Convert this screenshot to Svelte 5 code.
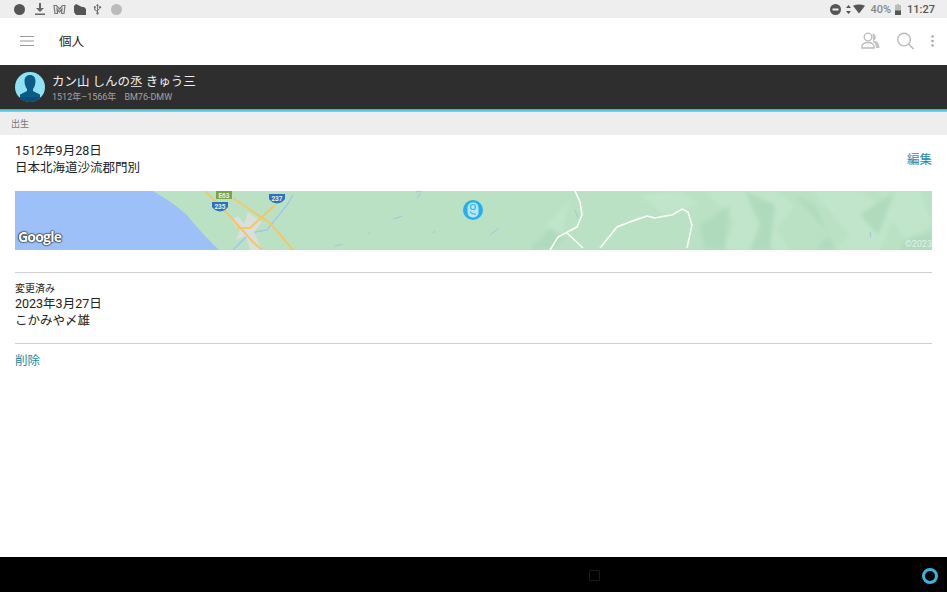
<script>
  const lightHills = [
    "M705 191L735 222L722 250L760 250L795 205L775 191Z",
    "M812 191L850 235L835 250L880 250L895 215L860 191Z",
    "M880 191L920 191L932 225L905 240L890 215Z",
    "M640 195L680 191L700 205L665 215Z",
    "M545 225L570 200L560 240Z",
    "M765 215L790 250H745Z"
  ];
  const darkHills = [
    "M745 191L760 225L750 250L770 250L775 205Z",
    "M795 195L830 235L815 250L835 250L815 205Z",
    "M860 215L895 191L878 235Z",
    "M528 250L550 228L565 238L550 250Z",
    "M700 225L730 205L725 250L705 250Z",
    "M905 240L932 232V250H900Z"
  ];
</script>

<div class="screen">
  <header class="status">
    <div class="status-left">
      <span class="dot dark"></span>
      <svg width="10" height="12" viewBox="0 0 10 12"><path d="M4 0h2v5h3L5 9 1 5h3zM0 10.500h10V12H0z" fill="#666"/></svg>
      <svg width="13" height="11" viewBox="0 0 13 11"><path d="M1 1.500h2.500L6.500 5l3-3.500H12l-1 8H8.500L9 5 6.500 8 4 5l.5 4.500H2z" fill="none" stroke="#777" stroke-width="1.200"/></svg>
      <svg width="12" height="11" viewBox="0 0 12 11"><path d="M0 2l2-2 2 1 2 1 2 1h2l2 2v6H2L0 8z" fill="#555"/></svg>
      <svg class="usb" width="9" height="13" viewBox="0 0 10 13"><path d="M5 0l1.500 2.500h-1v7a1.300 1.300 0 1 1-1 0v-7h-1zM1 3h2v2h-.5v1.500l2 1.500v1l-3-2V5H1zM8 3a1 1 0 1 1-.5 1.800V6l-2 1.500v-1l1.500-1v-.7A1 1 0 0 1 8 3z" fill="#666"/></svg>
      <span class="dot light"></span>
    </div>
    <div class="status-right">
      <svg width="11" height="11" viewBox="0 0 11 11"><circle cx="5.500" cy="5.500" r="5.500" fill="#555"/><rect x="2.500" y="4.500" width="6" height="2" fill="#eee"/></svg>
      <svg class="arrows" width="5" height="9" viewBox="0 0 5 9"><path d="M2.500 0L5 3H0zM2.500 9L0 6h5z" fill="#555"/></svg>
      <svg class="wifi" width="12" height="10" viewBox="0 0 13 10"><path d="M0 1.500Q6.500-1.500 13 1.500L6.500 10z" fill="#555"/></svg>
      <span class="pct">40%</span>
      <svg class="batt" width="6" height="11" viewBox="0 0 6 11"><path d="M2 0h2v1h2v10H0V1h2z" fill="#bbb"/><path d="M0 6.500h6V11H0z" fill="#555"/></svg>
      <span class="clock">11:27</span>
    </div>
  </header>

  <nav class="toolbar">
    <div class="toolbar-left">
      <svg width="14" height="10" viewBox="0 0 14 10"><path d="M0 .5h14M0 5h14M0 9.500h14" stroke="#999" stroke-width="1"/></svg>
      <span class="title">個人</span>
    </div>
    <div class="toolbar-right">
      <svg width="19" height="17" viewBox="0 0 19 17"><circle cx="7" cy="5" r="3.800" fill="none" stroke="#bbb" stroke-width="1.300"/><path d="M.7 16c0-4 2.500-5.500 6.300-5.500s6.300 1.500 6.300 5.500z" fill="none" stroke="#bbb" stroke-width="1.300"/><path d="M11.500 1.500a3.800 3.800 0 0 1 1 7.300c3.500.3 6 2 6 7.200H15c0-3-1-5-3-6z" fill="#c4c4c4"/></svg>
      <svg width="17" height="18" viewBox="0 0 18 18"><circle cx="7.500" cy="7.500" r="6.700" fill="none" stroke="#bbb" stroke-width="1.500"/><path d="M12.500 12.500l5 5" stroke="#bbb" stroke-width="1.700"/></svg>
      <svg width="3" height="12" viewBox="0 0 3 12"><circle cx="1.500" cy="1.500" r="1.300" fill="#aaa"/><circle cx="1.500" cy="6" r="1.300" fill="#aaa"/><circle cx="1.500" cy="10.500" r="1.300" fill="#aaa"/></svg>
    </div>
  </nav>

  <section class="person">
    <svg class="avatar" width="30" height="30" viewBox="0 0 30 30">
      <defs><clipPath id="av"><circle cx="15" cy="15" r="15"/></clipPath></defs>
      <g clip-path="url(#av)">
        <rect width="30" height="30" fill="#8fe2f4"/>
        <path d="M9.500 9c0-4 2.500-6 5.500-6s5.500 2 5.500 6c0 3.500-1 6-2.500 8v2l7 3.500V30H5v-7.500l7-3.500v-2c-1.500-2-2.500-4.500-2.500-8z" fill="#0c5c86"/>
        <rect y="25" width="30" height="5" fill="#0a4f76"/>
      </g>
    </svg>
    <div class="person-text">
      <div class="person-name">カン山 しんの丞 きゅう三</div>
      <div class="person-meta"><span>1512年–1566年</span><span>BM76-DMW</span></div>
    </div>
  </section>
  <div class="rule"></div>

  <div class="section-head">出生</div>

  <main class="content">
    <div class="event">
      <div class="event-text">
        <div>1512年9月28日</div>
        <div>日本北海道沙流郡門別</div>
      </div>
      <span class="link edit">編集</span>
    </div>

    <div class="map">
      <svg width="917" height="59" viewBox="15 191 917 59">
        <defs>
          <filter id="soft" x="-5%" y="-5%" width="110%" height="110%"><feGaussianBlur stdDeviation="2"/></filter>
          <filter id="tiny" x="-5%" y="-20%" width="110%" height="140%"><feGaussianBlur stdDeviation="0.400"/></filter>
        </defs>
        <rect x="15" y="191" width="917" height="59" fill="#bae1c3"/>
        <g filter="url(#soft)">
          {#each lightHills as d}<path d={d} fill="#c1e5cb"/>{/each}
          {#each darkHills as d}<path d={d} fill="#afdabc"/>{/each}
        </g>
        <g filter="url(#tiny)">
          <path d="M15 191H153C165 198 177 206 187 215C197 228 207 238 219 250H15Z" fill="#9cc0f7"/>
          <path d="M233 250L250 233 267 230 287 205 293 195" fill="none" stroke="#9cc4ee" stroke-width="1.300"/>
          <path d="M231 220L238 216 244 224 248 212 262 222 254 232 262 250H250L246 236 236 240 240 230Z" fill="#d9dfdb"/>
          <path d="M205 191L227 213 253 242 262 250M233 198L270 223 293 250M275 205L250 228 238 228" fill="none" stroke="#f3c766" stroke-width="2"/>
          <path d="M575 191L580 202 582 215 577 227 558 237 550 250M567 233L583 248M630 222L647 216 655 218 665 216 672 215 682 209 688 212 692 225 687 248M640 218L617 227 600 248" fill="none" stroke="#fff" stroke-width="1.500"/>
          <path d="M416 192L422 191M417 198L421 193M393 219L402 216M369 234L370 232M433 233L435 231M490 235L499 228M575 210L578 218M335 246L343 244M870 232L871 237" stroke="#9cc4e8" fill="none"/>
          <rect x="216" y="191" width="16" height="8" fill="#7da443"/>
          <path d="M212 202h16v5q-3 4-8 4.500q-5-.5-8-4.500z" fill="#2f6fc0"/>
          <path d="M269 194h16v5q-3 4-8 4.500q-5-.5-8-4.500z" fill="#2f6fc0"/>
        </g>
        <text x="224" y="197.500" class="shield">E63</text>
        <text x="220" y="208.500" class="shield">235</text>
        <text x="277" y="200.500" class="shield">237</text>
        <circle cx="473" cy="210" r="10" fill="#25aef0"/>
        <rect x="467.500" y="202.500" width="11" height="15" rx="5" fill="#b4e8f6"/>
        <circle cx="473" cy="207" r="2.500" fill="none" stroke="#3ab8ea" stroke-width="1.200"/>
        <path d="M470 211.500c2 2.500 4 3 6 2.500" fill="none" stroke="#3ab8ea" stroke-width="1.200"/>
      </svg>
      <span class="google">Google</span>
      <span class="copy">©2023</span>
    </div>

    <hr />

    <div class="changed">
      <div class="changed-label">変更済み</div>
      <div>2023年3月27日</div>
      <div>こかみや〆雄</div>
    </div>

    <hr class="second" />

    <span class="link delete">削除</span>
  </main>

  <footer class="navbar">
    <span class="square"></span>
    <span class="ring"></span>
  </footer>
</div>

<style>
  :global(body) { margin: 0; background: #fff; }
  .screen {
    width: 947px; height: 592px; display: flex; flex-direction: column; overflow: hidden;
    font-family: "Roboto", "Noto Sans CJK JP", sans-serif; color: #222; background: #fff;
  }
  .status {
    height: 18px; flex: none; background: #eeeeee; display: flex; align-items: center;
    justify-content: space-between; padding: 0 12px 0 14px; box-sizing: border-box;
  }
  .status-left { display: flex; align-items: center; gap: 8px; }
  .status-right { display: flex; align-items: center; }
  .dot { width: 11px; height: 11px; border-radius: 50%; display: block; }
  .dark { background: #555; margin-right: 2px; }
  .light { background: #bbb; }
  .usb { margin-left: -1px; margin-right: 1px; }
  .arrows { margin-left: 5px; }
  .wifi { margin-left: 2px; }
  .pct { font-size: 11px; color: #888; margin-left: 5px; font-weight: 500; }
  .batt { margin-left: 4px; }
  .clock { font-size: 11px; color: #555; margin-left: 6px; font-weight: 500; }
  .toolbar {
    height: 47px; flex: none; display: flex; align-items: center; justify-content: space-between;
    padding: 0 13px 2px 20px; box-sizing: border-box;
  }
  .toolbar-left { display: flex; align-items: center; gap: 25px; }
  .title { font-size: 12.500px; color: #222; }
  .toolbar-right { display: flex; align-items: center; gap: 17px; }
  .person {
    height: 44px; flex: none; background: #2e2e2e; display: flex;
    align-items: center; gap: 7px; padding: 0 0 0 15px;
  }
  .rule { height: 3px; flex: none; background: linear-gradient(#27b3cb, #7bdcea); }
  .person-text { display: flex; flex-direction: column; gap: 1px; padding-top: 2px; }
  .person-name { font-size: 12.500px; line-height: 17px; color: #f0f0f0; }
  .person-meta { font-size: 9px; line-height: 12px; color: #a4a4a4; display: flex; gap: 8px; }
  .section-head {
    height: 23px; flex: none; background: #eeeeee; font-size: 9px; line-height: 24px;
    padding-left: 11px; color: #777;
  }
  .content { flex: 1; padding: 6px 15px 0; display: flex; flex-direction: column; }
  .event { display: flex; justify-content: space-between; align-items: center; height: 36px; }
  .event-text { font-size: 12.500px; line-height: 17.500px; }
  .link { color: #1c8ba6; font-size: 12.500px; }
  .edit { margin-bottom: 2px; }
  .map { position: relative; height: 59px; margin-top: 14px; overflow: hidden; }
  .map svg { display: block; }
  .shield { font: bold 6.500px "Roboto", sans-serif; fill: #e6f0e0; text-anchor: middle; }
  .google {
    position: absolute; left: 3px; bottom: 4px; font: bold 14px "Open Sans", sans-serif; color: #fff;
    letter-spacing: -.8px; text-shadow: 0 0 1.500px #222, 0 0 1.500px #222, 0 0 1px #222, 0 0 1px #222;
  }
  .copy { position: absolute; right: 0; bottom: 1px; font-size: 9px; color: #e4f2e8; }
  hr { border: 0; border-top: 1px solid #cfcfcf; margin: 22px 0 0; width: 100%; }
  .changed { margin-top: 9px; font-size: 12.500px; line-height: 17px; }
  .changed-label { font-size: 10px; line-height: 13px; }
  hr.second { margin-top: 14px; }
  .delete { margin-top: 8px; align-self: flex-start; line-height: 17px; }
  .navbar { height: 35px; flex: none; background: #000; position: relative; }
  .square {
    position: absolute; left: 589px; top: 13px; width: 9px; height: 9px; border: 1px solid #1a1a1a; border-radius: 1px;
  }
  .ring {
    position: absolute; left: 922px; top: 11px; width: 10px; height: 10px; border: 3px solid #3ab4dc; border-radius: 50%;
  }
</style>
